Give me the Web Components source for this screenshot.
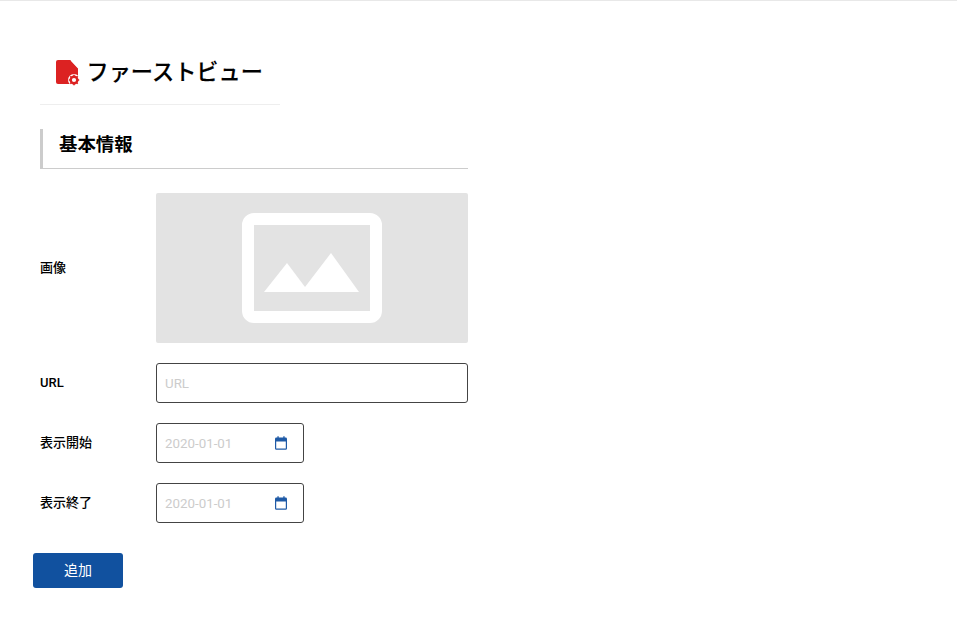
<!DOCTYPE html>
<html lang="ja">
<head>
<meta charset="utf-8">
<title>ファーストビュー</title>
<style>
  html, body { margin: 0; padding: 0; background: #fff; }
  body { font-family: Roboto, "Noto Sans CJK JP", sans-serif; color: #000; }
</style>
</head>
<body>
<fv-page>
  <fv-title>ファーストビュー</fv-title>
  <fv-section-heading>基本情報</fv-section-heading>
  <fv-form-row label="画像"><fv-image-field></fv-image-field></fv-form-row>
  <fv-form-row label="URL"><fv-text-field placeholder="URL"></fv-text-field></fv-form-row>
  <fv-form-row label="表示開始"><fv-date-field placeholder="2020-01-01"></fv-date-field></fv-form-row>
  <fv-form-row label="表示終了"><fv-date-field placeholder="2020-01-01"></fv-date-field></fv-form-row>
  <fv-button>追加</fv-button>
</fv-page>

<script>
class FvPage extends HTMLElement {
    constructor() {
        super();
        this.attachShadow({ mode: 'open' });
        this.shadowRoot.innerHTML = `
        <style>
          :host {
            display: flex;
            flex-direction: column;
            box-sizing: border-box;
            width: 100%;
            min-height: 622px;
            border-top: 1px solid #e8e8e8;
            padding: 39px 0 0 40px;
          }
        </style>
        <slot></slot>
      `;
    }
}

class FvTitle extends HTMLElement {
    constructor() {
        super();
        this.attachShadow({ mode: 'open' });
        this.shadowRoot.innerHTML = `
        <style>
          :host {
            display: flex;
            align-items: center;
            box-sizing: border-box;
            width: 240px;
            height: 65px;
            padding: 1px 0 0 16px;
            margin-bottom: 24px;
            border-bottom: 1px solid #eeeeee;
            font-size: 22.2px;
            font-weight: 500;
            line-height: 1;
            -webkit-text-stroke: 0.15px #000;
          }
          svg { width: 24px; height: 26px; margin-right: 6.5px; flex: none; }
        </style>
        <svg viewBox="0 0 24 26">
          <path fill="#dc2222" d="M2 0h12.5L22 8v14a2 2 0 0 1-2 2H2a2 2 0 0 1-2-2V2a2 2 0 0 1 2-2z"/>
          <path fill="none" stroke="#fff" stroke-width="1.2" d="M15 0l7.5 8"/>
          <circle cx="18" cy="20" r="6" fill="#fff"/>
          <circle cx="18" cy="20" r="3.3" fill="none" stroke="#dc2222" stroke-width="2.4"/>
          <path stroke="#dc2222" stroke-width="1.6" d="M18 14.8v2M18 23.2v2M12.8 20h2M21.2 20h2M14.3 16.3l1.4 1.4M20.3 22.3l1.4 1.4M14.3 23.7l1.4-1.4M20.3 17.7l1.4-1.4"/>
        </svg>
        <slot></slot>
      `;
    }
}

class FvSectionHeading extends HTMLElement {
    constructor() {
        super();
        this.attachShadow({ mode: 'open' });
        this.shadowRoot.innerHTML = `
        <style>
          :host {
            display: flex;
            align-items: center;
            box-sizing: border-box;
            width: 428px;
            height: 40px;
            padding: 0 0 6px 16px;
            margin-bottom: 24px;
            border-left: 3px solid #cccccc;
            border-bottom: 1px solid #cccccc;
            font-size: 18.4px;
            font-weight: 700;
            line-height: 1;
          }
        </style>
        <slot></slot>
      `;
    }
}

class FvFormRow extends HTMLElement {
    constructor() {
        super();
        this.attachShadow({ mode: 'open' });
        this.shadowRoot.innerHTML = `
        <style>
          :host {
            display: flex;
            align-items: center;
            margin-bottom: 20px;
          }
          .label {
            width: 116px;
            flex: none;
            padding-bottom: 2px;
            font-size: 13px;
            font-weight: 500;
            line-height: 1;
          }
        </style>
        <div class="label"></div>
        <slot></slot>
      `;
    }

    connectedCallback() {
        this.shadowRoot.querySelector('.label').textContent = this.getAttribute('label') || '';
    }
}

class FvImageField extends HTMLElement {
    constructor() {
        super();
        this.attachShadow({ mode: 'open' });
        this.shadowRoot.innerHTML = `
        <style>
          :host {
            display: flex;
            align-items: center;
            justify-content: center;
            width: 312px;
            height: 150px;
            background: #e3e3e3;
            border-radius: 2px;
          }
          svg { width: 142px; height: 110px; display: block; }
        </style>
        <svg viewBox="0 0 142 110">
          <rect x="7" y="6" width="128" height="98" rx="6" fill="none" stroke="#fff" stroke-width="12"/>
          <path fill="#fff" d="M23 79 L46 50 L64 74 L90 40 L118 79 Z"/>
        </svg>
      `;
    }
}

class FvTextField extends HTMLElement {
    constructor() {
        super();
        this.attachShadow({ mode: 'open' });
        this.shadowRoot.innerHTML = `
        <style>
          :host {
            display: flex;
            align-items: center;
            box-sizing: border-box;
            width: 312px;
            height: 40px;
            padding: 0 8px;
            border: 1px solid #444444;
            border-radius: 3px;
            background: #fff;
          }
          input {
            flex: 1;
            min-width: 0;
            border: 0;
            outline: 0;
            padding: 0;
            background: transparent;
            font: 400 13.33px Roboto, "Noto Sans CJK JP", sans-serif;
          }
          input::placeholder { color: #cccccc; opacity: 1; }
        </style>
        <input type="text">
      `;
    }

    connectedCallback() {
        this.shadowRoot.querySelector('input').placeholder = this.getAttribute('placeholder') || '';
    }
}

class FvDateField extends HTMLElement {
    constructor() {
        super();
        this.attachShadow({ mode: 'open' });
        this.shadowRoot.innerHTML = `
        <style>
          :host {
            display: flex;
            align-items: center;
            box-sizing: border-box;
            width: 148px;
            height: 40px;
            padding: 0 14px 0 8px;
            border: 1px solid #444444;
            border-radius: 3px;
            background: #fff;
          }
          input {
            flex: 1;
            min-width: 0;
            border: 0;
            outline: 0;
            padding: 0;
            background: transparent;
            font: 400 13.33px Roboto, "Noto Sans CJK JP", sans-serif;
          }
          input::placeholder { color: #cccccc; opacity: 1; }
          svg { width: 16px; height: 16px; flex: none; }
        </style>
        <input type="text">
        <svg viewBox="0 0 16 16">
          <path fill="#1f5aa6" d="M4.4 1.2h1.3v1.4h4.6V1.2h1.3v1.4h1a1.4 1.4 0 0 1 1.4 1.4v9.4a1.4 1.4 0 0 1-1.4 1.4H3.4A1.4 1.4 0 0 1 2 13.4V4a1.4 1.4 0 0 1 1.4-1.4h1zM3.2 6.6v7h9.6v-7z"/>
        </svg>
      `;
    }

    connectedCallback() {
        this.shadowRoot.querySelector('input').placeholder = this.getAttribute('placeholder') || '';
    }
}

class FvButton extends HTMLElement {
    constructor() {
        super();
        this.attachShadow({ mode: 'open' });
        this.shadowRoot.innerHTML = `
        <style>
          :host {
            display: block;
            margin: 10px 0 0 -7px;
          }
          button {
            display: block;
            width: 90px;
            height: 35px;
            padding: 0 0 2px;
            border: 0;
            border-radius: 3px;
            background: #11519f;
            color: #fff;
            font: 400 14px/1 Roboto, "Noto Sans CJK JP", sans-serif;
          }
        </style>
        <button type="button"><slot></slot></button>
      `;
    }
}

customElements.define('fv-page', FvPage);
customElements.define('fv-title', FvTitle);
customElements.define('fv-section-heading', FvSectionHeading);
customElements.define('fv-form-row', FvFormRow);
customElements.define('fv-image-field', FvImageField);
customElements.define('fv-text-field', FvTextField);
customElements.define('fv-date-field', FvDateField);
customElements.define('fv-button', FvButton);
</script>
</body>
</html>
